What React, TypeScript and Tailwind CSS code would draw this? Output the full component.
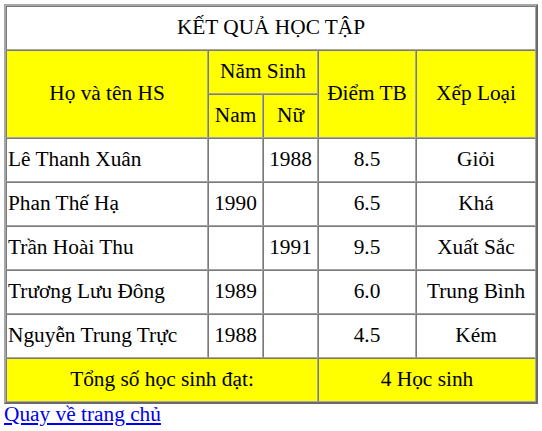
const students = [
  { name: 'Lê Thanh Xuân', nam: '', nu: '1988', diem: '8.5', loai: 'Giỏi' },
  { name: 'Phan Thế Hạ', nam: '1990', nu: '', diem: '6.5', loai: 'Khá' },
  { name: 'Trần Hoài Thu', nam: '', nu: '1991', diem: '9.5', loai: 'Xuất Sắc' },
  { name: 'Trương Lưu Đông', nam: '1989', nu: '', diem: '6.0', loai: 'Trung Bình' },
  { name: 'Nguyễn Trung Trực', nam: '1988', nu: '', diem: '4.5', loai: 'Kém' },
];

// inset look: darker top/left, lighter bottom/right
const cell = 'border border-t-[#7a7a7a] border-l-[#7a7a7a] border-r-[#a6a6a6] border-b-[#a6a6a6] px-px h-[44px] text-center align-middle';

export default function App() {
  return (
    <div className="p-1 bg-white text-black text-[21.33px] font-['Liberation_Serif','Times_New_Roman',serif] leading-normal">
      <table className="w-[534px] table-fixed border-separate border-spacing-0 border-2 border-t-[#a6a6a6] border-l-[#a6a6a6] border-r-[#6b6b6b] border-b-[#6b6b6b]">
        <colgroup>
          <col className="w-[202px]" />
          <col className="w-[55px]" />
          <col className="w-[55px]" />
          <col className="w-[98px]" />
          <col className="w-[120px]" />
        </colgroup>
        <tbody>
          <tr>
            <td colSpan={5} className={cell}>KẾT QUẢ HỌC TẬP</td>
          </tr>
          <tr className="bg-[#ffff00]">
            <td rowSpan={2} className={cell}>Họ và tên HS</td>
            <td colSpan={2} className={cell}>Năm Sinh</td>
            <td rowSpan={2} className={cell}>Điểm TB</td>
            <td rowSpan={2} className={cell}>Xếp Loại</td>
          </tr>
          <tr className="bg-[#ffff00]">
            <td className={cell}>Nam</td>
            <td className={cell}>Nữ</td>
          </tr>
          {students.map(s => (
            <tr key={s.name}>
              <td className={`${cell} !text-left`}>{s.name}</td>
              <td className={cell}>{s.nam}</td>
              <td className={cell}>{s.nu}</td>
              <td className={cell}>{s.diem}</td>
              <td className={cell}>{s.loai}</td>
            </tr>
          ))}
          <tr className="bg-[#ffff00]">
            <td colSpan={3} className={cell}>Tổng số học sinh đạt:</td>
            <td colSpan={2} className={cell}>4 Học sinh</td>
          </tr>
        </tbody>
      </table>
      <div className="leading-[20px]">
        <a href="#" className="text-[#0000ee] underline">Quay về trang chủ</a>
      </div>
    </div>
  );
}
